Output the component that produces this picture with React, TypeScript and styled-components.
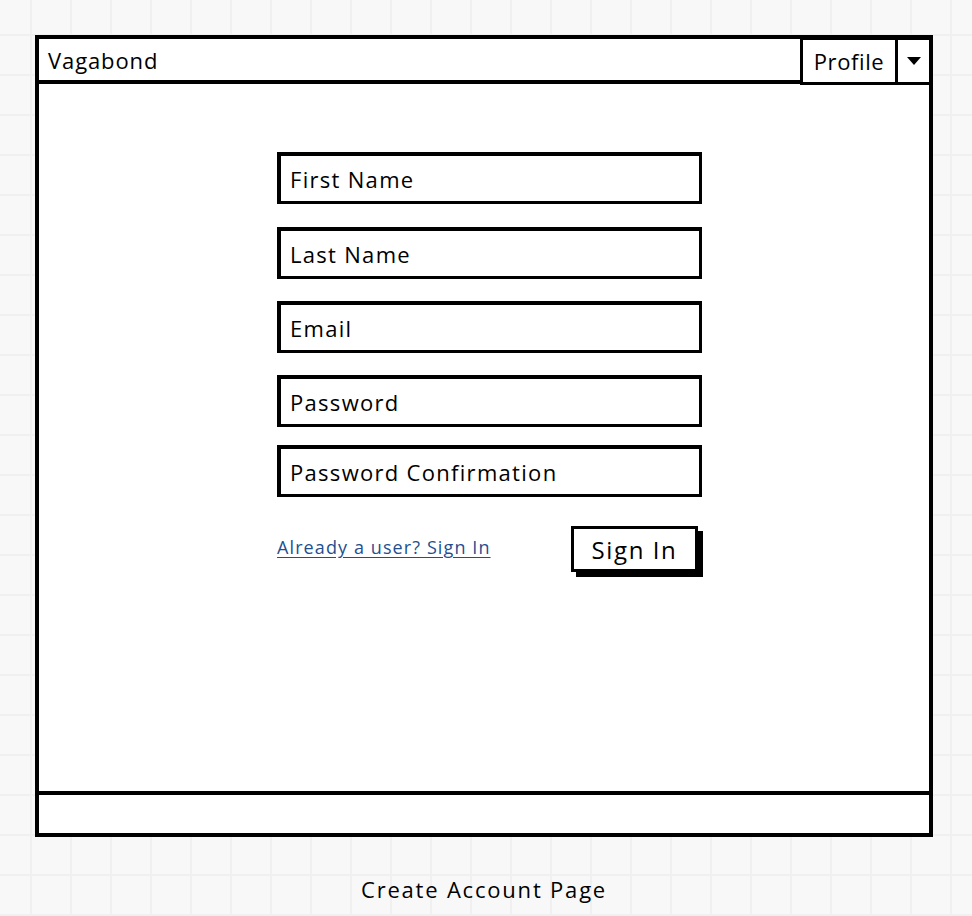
import styled, { createGlobalStyle } from "styled-components";

const GlobalStyle = createGlobalStyle`
  html, body {
    margin: 0;
    padding: 0;
    height: 100%;
  }
  body {
    font-family: "Open Sans", "Liberation Sans", sans-serif;
    color: #000;
    background-color: #f8f8f8;
    background-image:
      linear-gradient(to right, #f0f0f0 2px, transparent 2px),
      linear-gradient(to bottom, #f0f0f0 2px, transparent 2px);
    background-size: 40px 40px;
    background-position: 30px 34px;
  }
`;

const fields = [
  { label: "First Name", gap: 23 },
  { label: "Last Name", gap: 22 },
  { label: "Email", gap: 22 },
  { label: "Password", gap: 18 },
  { label: "Password Confirmation", gap: 29 },
];

const App = () => (
  <>
    <GlobalStyle />
    <Page>
      <Window>
        <TitleBar>
          <Title>Vagabond</Title>
          <ProfileButton>Profile</ProfileButton>
          <DropdownButton>
            <svg width="16" height="10" viewBox="0 0 16 10">
              <path d="M1 1 H15 L8 9 Z" fill="#000" />
            </svg>
          </DropdownButton>
        </TitleBar>
        <Body>
          <Form>
            {fields.map((f) => (
              <Field key={f.label} $gap={f.gap}>
                {f.label}
              </Field>
            ))}
            <Actions>
              <SignInLink href="#">Already a user? Sign In</SignInLink>
              <Button>Sign In</Button>
            </Actions>
          </Form>
        </Body>
        <Footer />
      </Window>
      <Caption>Create Account Page</Caption>
    </Page>
  </>
);

const Page = styled.div`
  width: 898px;
  padding: 35px 0 0 35px;
  display: flex;
  flex-direction: column;
  align-items: center;
`;

const Window = styled.div`
  box-sizing: border-box;
  width: 898px;
  height: 802px;
  border: 4px solid #000;
  background: #fff;
  display: flex;
  flex-direction: column;
`;

const TitleBar = styled.div`
  height: 41px;
  border-bottom: 4px solid #000;
  display: flex;
  align-items: stretch;
`;

const Title = styled.div`
  flex: 1;
  display: flex;
  align-items: center;
  padding-left: 9px;
  font-size: 22px;
  letter-spacing: 0.9px;
`;

const ProfileButton = styled.div`
  box-sizing: border-box;
  width: 95px;
  margin: -2px 0 -5px;
  border: 3px solid #000;
  border-right: none;
  background: #fff;
  display: flex;
  align-items: center;
  justify-content: center;
  font-size: 22px;
  letter-spacing: 0.6px;
`;

const DropdownButton = styled.div`
  box-sizing: border-box;
  width: 34px;
  margin: -2px 0 -5px;
  border: 3px solid #000;
  border-right: none;
  background: #fff;
  display: flex;
  align-items: center;
  justify-content: center;
`;

const Body = styled.div`
  flex: 1;
  padding: 68px 0 0 238px;
`;

const Form = styled.div`
  width: 425px;
  display: flex;
  flex-direction: column;
`;

const Field = styled.div<{ $gap: number }>`
  box-sizing: border-box;
  height: 52px;
  margin-bottom: ${({ $gap }) => $gap}px;
  border: 3px solid #000;
  border-left-width: 4px;
  border-top-width: 4px;
  padding-left: 9px;
  display: flex;
  align-items: center;
  font-size: 22px;
  letter-spacing: 1.3px;
`;

const Actions = styled.div`
  display: flex;
  justify-content: space-between;
  align-items: flex-start;
`;

const SignInLink = styled.a`
  margin-top: 9px;
  color: #1f4f8f;
  font-size: 18px;
  letter-spacing: 1.1px;
  text-decoration: underline;
  text-underline-offset: 3px;
`;

const Button = styled.div`
  box-sizing: border-box;
  width: 127px;
  height: 46px;
  margin-right: 4px;
  border: 3px solid #000;
  box-shadow: 5px 5px 0 #000;
  background: #fff;
  display: flex;
  align-items: center;
  justify-content: center;
  font-size: 24px;
  letter-spacing: 1.6px;
`;

const Footer = styled.div`
  height: 38px;
  border-top: 4px solid #000;
`;

const Caption = styled.div`
  margin-top: 37px;
  font-size: 22px;
  letter-spacing: 1.8px;
`;

export default App;
